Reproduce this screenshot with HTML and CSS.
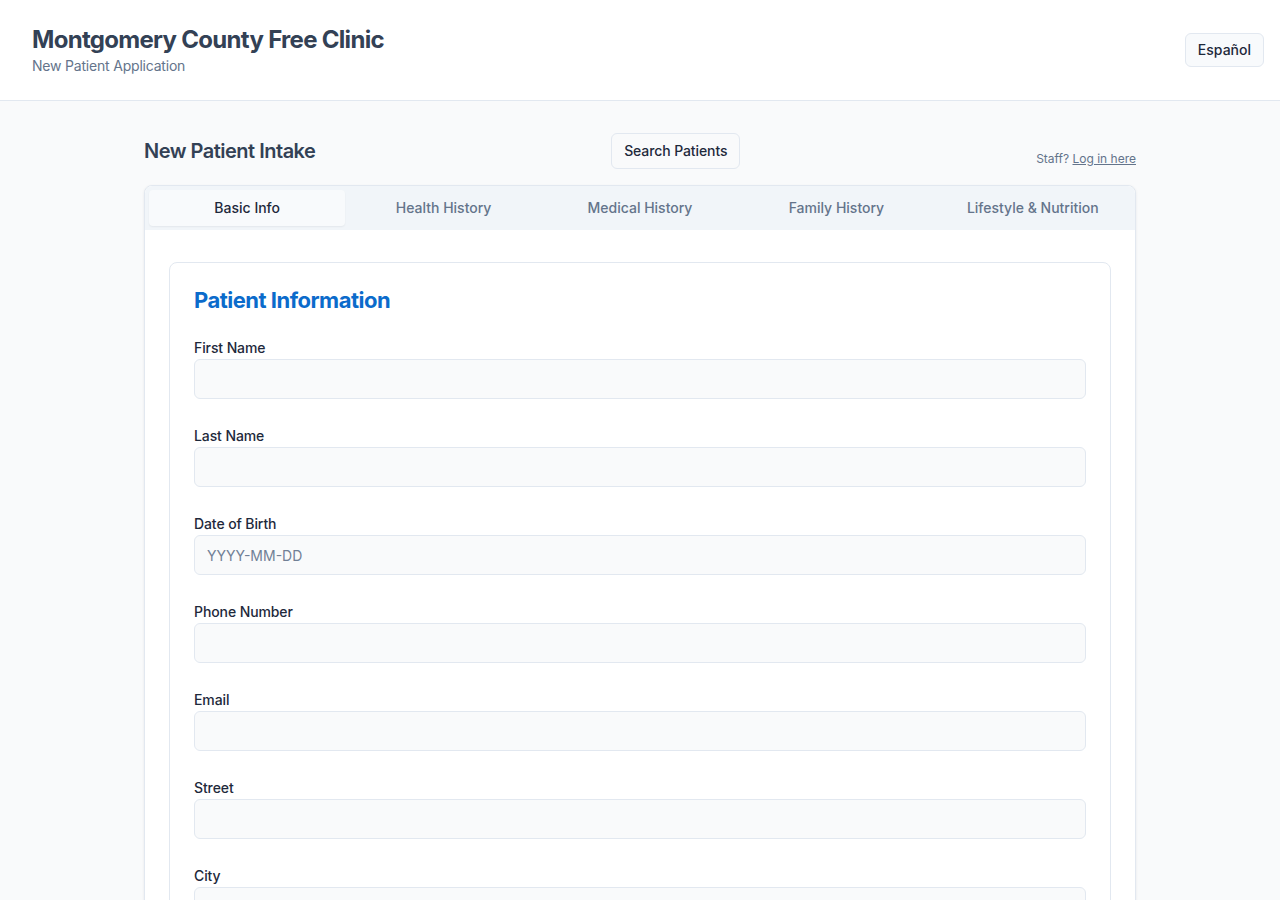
FILE: index.html
```html
<!DOCTYPE html>
<html lang="en">
<head>
<meta charset="utf-8">
<title>New Patient Application</title>
<link rel="stylesheet" href="styles.css">
</head>
<body>
<header class="site-header">
  <div class="brand">
    <h1 class="brand-title">Montgomery County Free Clinic</h1>
    <div class="brand-sub">New Patient Application</div>
  </div>
  <button class="btn lang-btn">Español</button>
</header>
<main class="main">
  <div class="container">
    <div class="top-row">
      <h2 class="page-title">New Patient Intake</h2>
      <button class="btn search-btn">Search Patients</button>
      <div class="staff">Staff? <a href="#" class="staff-link">Log in here</a></div>
    </div>
    <div class="card">
      <nav class="tabs">
        <div class="tab active">Basic Info</div>
        <div class="tab">Health History</div>
        <div class="tab">Medical History</div>
        <div class="tab">Family History</div>
        <div class="tab">Lifestyle &amp; Nutrition</div>
      </nav>
      <div class="card-body">
        <section class="section">
          <h3 class="section-title">Patient Information</h3>
          <div class="field"><label class="label">First Name</label><input class="input" type="text"></div>
          <div class="field"><label class="label">Last Name</label><input class="input" type="text"></div>
          <div class="field"><label class="label">Date of Birth</label><input class="input" type="text" placeholder="YYYY-MM-DD"></div>
          <div class="field"><label class="label">Phone Number</label><input class="input" type="text"></div>
          <div class="field"><label class="label">Email</label><input class="input" type="text"></div>
          <div class="field"><label class="label">Street</label><input class="input" type="text"></div>
          <div class="field"><label class="label">City</label><input class="input" type="text"></div>
          <div class="field"><label class="label">State</label><input class="input" type="text"></div>
        </section>
      </div>
    </div>
  </div>
</main>
</body>
</html>
```

FILE: styles.css
```css
* { box-sizing: border-box; }
html, body { margin: 0; padding: 0; }
body {
  font-family: Inter, "Noto Sans", sans-serif;
  background: #f9fafb;
  color: #334155;
}
.site-header {
  background: #ffffff;
  border-bottom: 1px solid #e2e8f0;
  height: 101px;
  padding: 24px 16px 24px 32px;
  display: flex;
  align-items: center;
  justify-content: space-between;
}
.brand { align-self: flex-start; }
.brand-title {
  margin: 0;
  font-size: 24px;
  line-height: 32px;
  font-weight: 700;
  color: #334155;
  letter-spacing: -0.7px;
}
.brand-sub {
  font-size: 14px;
  line-height: 20px;
  color: #64748b;
  letter-spacing: -0.2px;
}
.btn {
  font-family: inherit;
  font-size: 14px;
  line-height: 20px;
  font-weight: 500;
  color: #1e293b;
  background: #f8fafc;
  border: 1px solid #e2e8f0;
  border-radius: 6px;
  cursor: pointer;
}
.lang-btn { padding: 6px 12px; }
.main { padding-top: 32px; }
.container {
  width: 992px;
  margin: 0 auto;
}
.top-row {
  display: flex;
  justify-content: space-between;
  align-items: center;
  height: 36px;
  margin-bottom: 16px;
}
.page-title {
  margin: 0;
  font-size: 20px;
  line-height: 28px;
  font-weight: 600;
  color: #334155;
  letter-spacing: -0.5px;
}
.search-btn {
  padding: 7px 12px;
  background: #f9fafb;
  letter-spacing: -0.1px;
}
.staff {
  align-self: flex-end;
  font-size: 12px;
  line-height: 16px;
  color: #64748b;
  margin-bottom: 2px;
}
.staff-link { color: #64748b; text-decoration: underline; }
.card {
  background: #ffffff;
  border: 1px solid #e2e8f0;
  border-radius: 8px;
  box-shadow: 0 1px 3px rgba(15, 23, 42, 0.08);
  overflow: hidden;
}
.tabs {
  display: grid;
  grid-template-columns: repeat(5, 1fr);
  background: #f1f5f9;
  padding: 4px;
  border-radius: 7px 7px 0 0;
}
.tab {
  height: 36px;
  display: flex;
  align-items: center;
  justify-content: center;
  font-size: 14px;
  font-weight: 500;
  color: #64748b;
  border-radius: 4px;
  padding-bottom: 1px;
}
.tab.active {
  background: #f8fafc;
  color: #1e293b;
  box-shadow: 0 1px 2px rgba(15, 23, 42, 0.06);
}
.card-body { padding: 32px 24px 24px; }
.section {
  border: 1px solid #e2e8f0;
  border-radius: 8px;
  padding: 24px;
}
.section-title {
  margin: 0 0 25px;
  font-size: 22px;
  line-height: 26px;
  font-weight: 700;
  color: #0b6bcb;
  letter-spacing: -0.5px;
}
.field { margin-bottom: 27px; }
.label {
  display: block;
  font-size: 14px;
  line-height: 20px;
  font-weight: 500;
  color: #1e293b;
  margin-bottom: 1px;
  letter-spacing: -0.1px;
}
.input {
  display: block;
  width: 100%;
  height: 40px;
  padding: 0 12px;
  font-family: inherit;
  font-size: 14px;
  color: #1e293b;
  background: #f9fafb;
  border: 1px solid #e2e8f0;
  border-radius: 6px;
  outline: none;
}
.input::placeholder { color: #718096; }
```
